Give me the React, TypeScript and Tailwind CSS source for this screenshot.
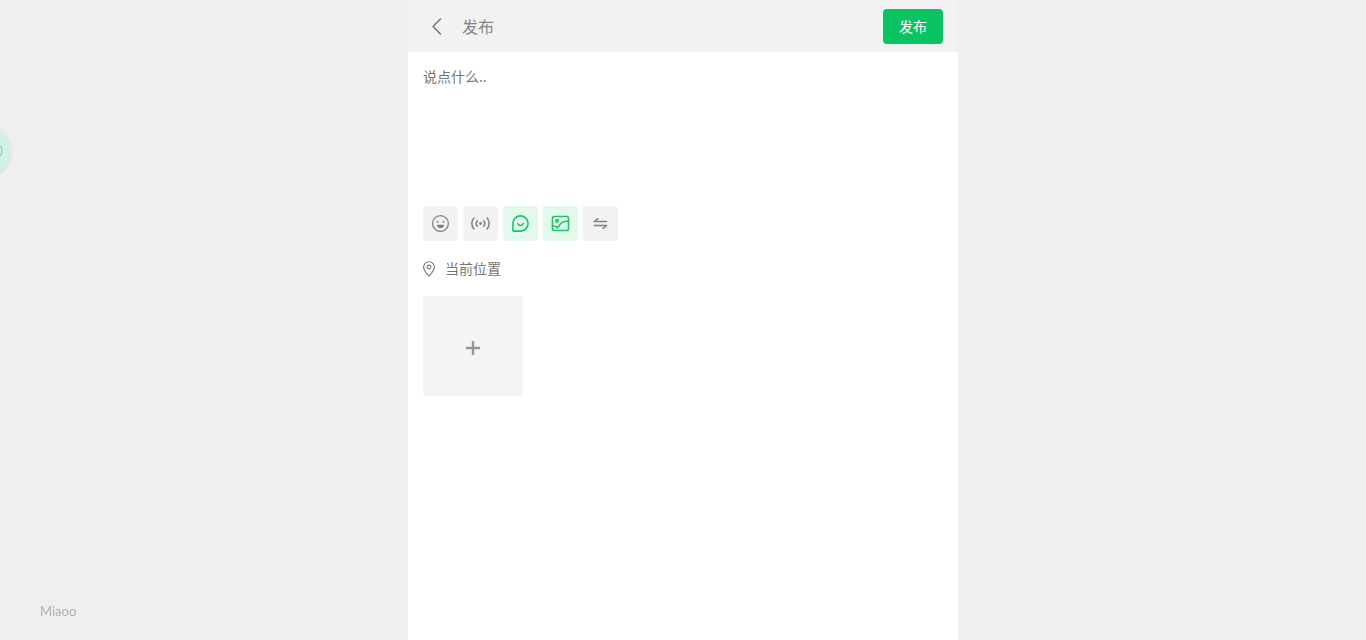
import { useState } from "react";
import type { ReactNode } from "react";

const stroke = {
  fill: "none",
  stroke: "currentColor",
  strokeLinecap: "round" as const,
  strokeLinejoin: "round" as const,
};

const toolBox = "0.5 0.5 19 19";

function BackIcon() {
  return (
    <svg viewBox="0 0 20 20" className="size-5" {...stroke} strokeWidth="1.5" aria-hidden="true">
      <path d="M13.5 3 6 10.500l7.500 7.500" />
    </svg>
  );
}

function SmileIcon() {
  return (
    <svg viewBox={toolBox} className="size-[19px]" {...stroke} strokeWidth="1.3" aria-hidden="true">
      <circle cx="10" cy="10" r="7.9" />
      <circle cx="7" cy="8.200" r="1" fill="currentColor" stroke="none" />
      <circle cx="13" cy="8.200" r="1" fill="currentColor" stroke="none" />
      <path d="M6.500 11.200h7c0 2-1.500 3.400-3.500 3.400s-3.500-1.400-3.500-3.400z" fill="currentColor" stroke="none" />
    </svg>
  );
}

function BroadcastIcon() {
  return (
    <svg viewBox={toolBox} className="size-[19px]" {...stroke} strokeWidth="1.5" aria-hidden="true">
      <circle cx="10" cy="10" r="1.400" fill="currentColor" stroke="none" />
      <path d="M6.900 7.200a4.200 4.200 0 0 0 0 5.600M13.100 7.200a4.200 4.200 0 0 1 0 5.600" />
      <path d="M3.400 4.500a8.400 8.400 0 0 0 0 11M16.600 4.500a8.400 8.400 0 0 1 0 11" />
    </svg>
  );
}

function ChatSmileIcon() {
  return (
    <svg viewBox={toolBox} className="size-[19px]" {...stroke} strokeWidth="1.600" aria-hidden="true">
      <path d="M10 2.400A7.600 7.600 0 1 1 10 17.600H3.200a.8.8 0 0 1-.8-.8V10A7.600 7.600 0 0 1 10 2.400z" />
      <path d="M7.200 10.200c.7 1.300 1.600 1.900 2.800 1.900s2.100-.6 2.800-1.900" />
    </svg>
  );
}

function PictureIcon() {
  return (
    <svg viewBox={toolBox} className="size-[19px]" {...stroke} strokeWidth="1.600" aria-hidden="true">
      <rect x="2" y="3" width="16" height="14" rx="1.800" />
      <circle cx="6.500" cy="7.300" r="1.300" />
      <path d="M2 12.300c2.200-.2 3.900.4 5.300 2.200M5.800 13.200c.9.500 1.900.1 2.600-.8 2.200-3.500 5-5.100 9.600-4.600" />
    </svg>
  );
}

function SwapIcon() {
  return (
    <svg viewBox={toolBox} className="size-[19px]" {...stroke} strokeWidth="1.500" aria-hidden="true">
      <path d="M16 8H3.700l3.800-2.800" />
      <path d="M4 12h12.300l-3.800 2.800" />
    </svg>
  );
}

function PinIcon() {
  return (
    <svg viewBox="0 0 12 16" className="h-4 w-3" {...stroke} strokeWidth="1.1" aria-hidden="true">
      <path d="M6 15.200C3.200 12 .6 9.200.6 6.200a5.400 5.400 0 0 1 10.800 0c0 3-2.600 5.800-5.400 9z" />
      <circle cx="6" cy="6" r="1.900" />
    </svg>
  );
}

function PlusIcon() {
  return (
    <svg viewBox="0 0 16 16" className="size-4" fill="none" stroke="currentColor" strokeWidth="2.400" aria-hidden="true">
      <path d="M8 1v14M1 8h14" />
    </svg>
  );
}

const tools: { label: string; icon: ReactNode; active?: boolean }[] = [
  { label: "表情", icon: <SmileIcon /> },
  { label: "广播", icon: <BroadcastIcon /> },
  { label: "评论", icon: <ChatSmileIcon />, active: true },
  { label: "图片", icon: <PictureIcon />, active: true },
  { label: "切换", icon: <SwapIcon /> },
];

export default function App() {
  const [text, setText] = useState("");

  return (
    <div className="min-h-screen bg-[#efefef] font-['Noto_Sans','Noto_Sans_CJK_SC',sans-serif] text-sm text-[#757575]">
      <main className="mx-auto min-h-screen max-w-[550px] bg-white">
        <header className="flex h-[52px] items-center justify-between bg-[#f2f2f2] px-[15px]">
          <div className="flex items-center gap-[15px] pl-1">
            <button type="button" aria-label="返回" className="flex size-5 items-center justify-center text-[#757575]">
              <BackIcon />
            </button>
            <h1 className="pt-[2px] text-base leading-6 text-[#858585]">发布</h1>
          </div>
          <button type="submit" form="post" className="h-[35px] w-[60px] rounded bg-[#0ac463] pt-[2px] text-sm text-white">
            发布
          </button>
        </header>

        <form id="post" onSubmit={(e) => e.preventDefault()} className="px-[15px] pt-[15px]">
          <textarea
            aria-label="内容"
            placeholder="说点什么.."
            value={text}
            onChange={(e) => setText(e.target.value)}
            className="block h-[139px] w-full resize-none text-sm leading-5 outline-none placeholder:text-[#757575]"
          />
          <div className="flex gap-[5px]">
            {tools.map((tool) => (
              <button
                key={tool.label}
                type="button"
                aria-label={tool.label}
                className={
                  tool.active
                    ? "flex size-[35px] items-center justify-center rounded-[3px] bg-[#e4f9ee] text-[#16c76b]"
                    : "flex size-[35px] items-center justify-center rounded-[3px] bg-[#f2f2f2] text-[#808080]"
                }
              >
                {tool.icon}
              </button>
            ))}
          </div>
          <button type="button" className="mt-[18px] flex h-5 items-center gap-[10px] text-sm leading-5">
            <PinIcon />
            当前位置
          </button>
          <button
            type="button"
            aria-label="添加图片"
            className="mt-[17px] flex size-[100px] items-center justify-center rounded-[3px] bg-[#f4f4f4] pt-1 text-[#8e979e]"
          >
            <PlusIcon />
          </button>
        </form>
      </main>

      <button
        type="button"
        aria-label="悬浮菜单"
        className="fixed top-[126px] -left-10 flex size-[50px] items-center justify-center rounded-full bg-[#cdf4e5] text-[#a3beb4] shadow-[0_1px_4px_rgba(0,0,0,0.12)]"
      >
        <svg viewBox="0 0 36 12" className="h-3 w-9" {...stroke} strokeWidth="1.300" aria-hidden="true">
          <ellipse cx="32" cy="6" rx="3" ry="5" />
        </svg>
      </button>
      <p className="fixed bottom-[19px] left-10 font-['Lato',sans-serif] text-[13px] leading-5 text-[#b0b0b0]">Miaoo</p>
    </div>
  );
}
